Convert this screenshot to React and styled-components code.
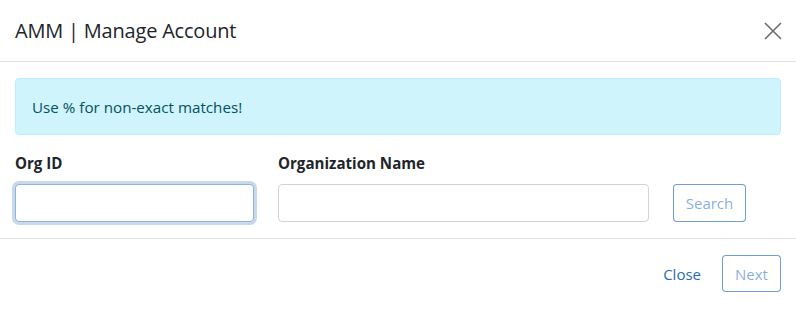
import React from "react";
import styled, { createGlobalStyle } from "styled-components";

const Global = createGlobalStyle`
  html, body { margin: 0; padding: 0; background: #fff; }
  body { font-family: "Open Sans", "Noto Sans", sans-serif; color: #212529; }
  * { box-sizing: border-box; }
`;

const Dialog = styled.div`
  width: 796px;
  height: 309px;
  background: #fff;
  display: flex;
  flex-direction: column;
`;

const Header = styled.div`
  height: 62px;
  display: flex;
  align-items: center;
  justify-content: space-between;
  padding: 0 15px;
  border-bottom: 1px solid #dee2e6;
`;

const Title = styled.h5`
  margin: 0;
  font-size: 20px;
  font-weight: 400;
  color: #212529;
  letter-spacing: -0.2px;
`;

const CloseX = styled.button`
  border: 0;
  background: none;
  padding: 0;
  width: 20px;
  height: 20px;
  display: flex;
  align-items: center;
  justify-content: center;
  margin-right: -2px;
`;

const Body = styled.div`
  padding: 16px 15px 16px;
  border-bottom: 1px solid #dee2e6;
`;

const Alert = styled.div`
  height: 57px;
  display: flex;
  align-items: center;
  padding: 0 16px;
  background: #cff4fc;
  border: 1px solid #b6effb;
  border-radius: 4px;
  color: #055160;
  font-size: 15.2px;
`;

const Row = styled.div`
  display: flex;
  align-items: flex-end;
  margin-top: 18px;
`;

const Field = styled.div`
  display: flex;
  flex-direction: column;
  width: ${(p) => p.$w}px;
  margin-right: ${(p) => p.$mr}px;
`;

const Label = styled.label`
  font-size: 15.1px;
  font-weight: 700;
  line-height: 20px;
  margin-bottom: 11px;
`;

const Input = styled.input`
  height: 38px;
  width: 100%;
  border: 1px solid ${(p) => (p.$focus ? "#8db3dc" : "#ced4da")};
  border-radius: 4px;
  outline: none;
  box-shadow: ${(p) => (p.$focus ? "0 0 0 3px rgba(72,128,190,0.3)" : "none")};
  font: inherit;
`;

const OutlineBtn = styled.button`
  height: ${(p) => p.$h}px;
  width: ${(p) => p.$w}px;
  border: 1px solid rgba(13, 94, 184, 0.6);
  border-radius: 4px;
  background: #fff;
  color: rgba(24, 104, 190, 0.55);
  font-family: inherit;
  font-size: 15px;
  padding: 0;
`;

const Footer = styled.div`
  flex: 1;
  display: flex;
  align-items: flex-start;
  justify-content: flex-end;
  padding: 16px 15px 0;
  gap: 21px;
`;

const LinkBtn = styled.button`
  border: 0;
  background: none;
  color: #2b6cb0;
  font-family: inherit;
  font-size: 15px;
  height: 37px;
  padding: 0;
`;

export default function App() {
  return (
    <>
      <Global />
      <Dialog>
        <Header>
          <Title>AMM | Manage Account</Title>
          <CloseX aria-label="Close">
            <svg width="18" height="18" viewBox="0 0 18 18">
              <path d="M1 1L17 17M17 1L1 17" stroke="#6c6c6c" strokeWidth="1.6" />
            </svg>
          </CloseX>
        </Header>
        <Body>
          <Alert>Use % for non-exact matches!</Alert>
          <Row>
            <Field $w={239} $mr={24}>
              <Label>Org ID</Label>
              <Input $focus />
            </Field>
            <Field $w={371} $mr={24}>
              <Label>Organization Name</Label>
              <Input />
            </Field>
            <OutlineBtn $w={73} $h={38} disabled>Search</OutlineBtn>
          </Row>
        </Body>
        <Footer>
          <LinkBtn>Close</LinkBtn>
          <OutlineBtn $w={59} $h={37} disabled>Next</OutlineBtn>
        </Footer>
      </Dialog>
    </>
  );
}
